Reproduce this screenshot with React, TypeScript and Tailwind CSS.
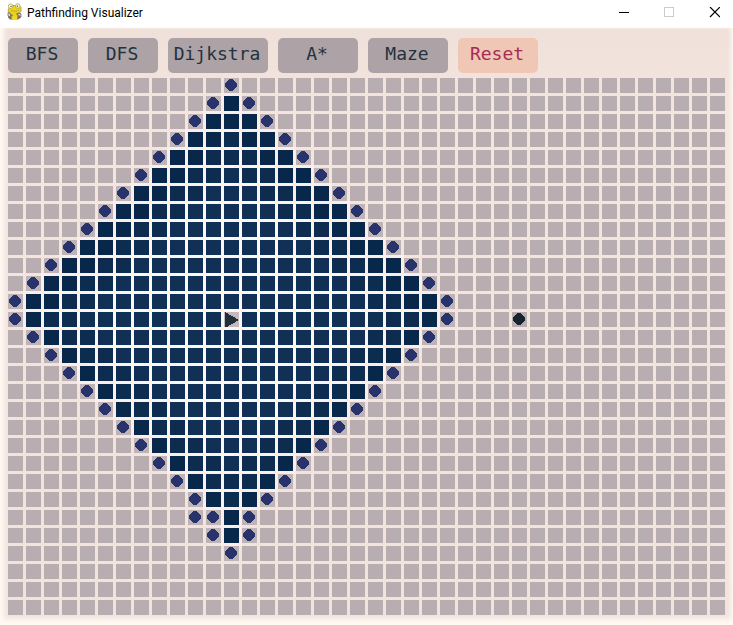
import React from "react";

type Tone = "neutral" | "danger";

const ACTIONS: { label: string; width: string; tone: Tone }[] = [
  { label: "BFS", width: "w-[70px]", tone: "neutral" },
  { label: "DFS", width: "w-[70px]", tone: "neutral" },
  { label: "Dijkstra", width: "w-[100px]", tone: "neutral" },
  { label: "A*", width: "w-20", tone: "neutral" },
  { label: "Maze", width: "w-20", tone: "neutral" },
  { label: "Reset", width: "w-20", tone: "danger" },
];

const TONES: Record<Tone, string> = {
  neutral: "bg-[#ada3a6] text-[#22323e]",
  danger: "bg-[#f0c6b4] text-[#a52d55]",
};

const COLS = 40;
const ROWS = 30;
const START = { row: 13, col: 12 };
const GOAL = { row: 13, col: 28 };

// First and last frontier column of every row that the search has reached.
const FRONTIER: [number, number][] = [
  [12, 12], [11, 13], [10, 14], [9, 15], [8, 16], [7, 17], [6, 18], [5, 19], [4, 20],
  [3, 21], [2, 22], [1, 23], [0, 24], [0, 24], [1, 23], [2, 22], [3, 21], [4, 20],
  [5, 19], [6, 18], [7, 17], [8, 16], [9, 15], [10, 14], [10, 13], [11, 13], [12, 12],
];

function Disc({ color }: { color: string }) {
  return (
    <svg width="15" height="15" viewBox="0 0 15 15" shapeRendering="crispEdges" className={color} aria-hidden="true">
      <path
        fill="currentColor"
        d="M5 1h4v1h1v1h1v1h1v1h1v4h-1v1h-1v1h-1v1h-1v1H5v-1H4v-1H3v-1H2V9H1V5h1V4h1V3h1V2h1z"
      />
    </svg>
  );
}

function Cell({ row, col }: { row: number; col: number }) {
  const plain = "size-[15px] bg-[#b8adb1]";
  if (row === START.row && col === START.col) {
    return (
      <div className="size-[15px] bg-[#c3b9be] shadow-[0_0_0_3px_#fdf6f3]">
        <svg width="15" height="16" viewBox="0 0 15 16" shapeRendering="crispEdges" aria-hidden="true">
          <path d="M1 0L15 8L1 16z" fill="#1f303b" />
        </svg>
      </div>
    );
  }
  if (row === GOAL.row && col === GOAL.col) {
    return <div className={plain}><Disc color="text-[#17242e]" /></div>;
  }
  const span = FRONTIER[row];
  if (!span || col < span[0] || col > span[1]) return <div className={plain} />;
  if (col === span[0] || col === span[1] || (row === 24 && col === 11)) {
    return <div className="size-[15px] bg-[#beb3b7]"><Disc color="text-[#27336a]" /></div>;
  }
  const distance = Math.abs(row - START.row) + Math.abs(col - START.col);
  if (distance > 10) return <div className="size-[15px] bg-[#07284b] shadow-[0_0_0_3px_#faeeea]" />;
  if (distance > 8) return <div className="size-[15px] bg-[#0c2c50] shadow-[0_0_0_3px_#fcf3f0]" />;
  return <div className="size-[15px] bg-[#103155] shadow-[0_0_0_3px_#fdf6f3]" />;
}

function SnakeIcon() {
  return (
    <svg width="16" height="18" viewBox="0 0 16 18" aria-hidden="true">
      <path d="M1 9.5h10l3 1v4l-3 2H3l-2-2v-4z" fill="#77715f" />
      <path d="M3 2.5h9l2 2v4l-3 2H9l2 2-1 4H5l-1-3 2-1-3-2-2-3z" fill="#e9d31d" stroke="#a09128" strokeWidth=".7" />
      <path d="M1 9.5l3 1.5-1 3-2-1zM11 10l3 1v3l-3-1z" fill="#d8d7cf" stroke="#666151" strokeWidth=".7" />
      <path d="M5 15.5h5" fill="none" stroke="#f0d827" strokeWidth="3" />
      <circle cx="3.6" cy="3.2" r="2.3" fill="#f4f3df" stroke="#b5a83c" strokeWidth=".8" />
      <circle cx="10.8" cy="3" r="2.3" fill="#f4f3df" stroke="#b5a83c" strokeWidth=".8" />
      <circle cx="4" cy="3.4" r=".7" fill="#555" />
      <circle cx="10.5" cy="3.2" r=".7" fill="#555" />
      <path d="M4 7.5c3 1 6 1 8-.5" fill="none" stroke="#b39e20" strokeWidth=".7" />
      <path d="M11 12.5h2v2h-2z" fill="#a95a48" />
    </svg>
  );
}

export default function App() {
  return (
    <div className="flex min-h-screen flex-col bg-[#fff9f3]">
      <header className="flex h-7 items-center bg-white pr-[13px] pl-[7px] text-black">
        <div className="flex items-center gap-1 pb-1">
          <SnakeIcon />
          <h1 className="pt-0.5 font-['Roboto','Noto_Sans',sans-serif] text-xs leading-4">Pathfinding Visualizer</h1>
        </div>
        <div className="ml-auto flex items-center gap-[35px] pb-1">
          <button type="button" aria-label="Minimize" className="block">
            <svg width="10" height="11" viewBox="0 0 10 11" shapeRendering="crispEdges">
              <path d="M0 5.5h10" stroke="#000" />
            </svg>
          </button>
          <button type="button" aria-label="Maximize" disabled className="block">
            <svg width="10" height="11" viewBox="0 0 10 11" shapeRendering="crispEdges">
              <path d="M.5.5h9v9h-9z" fill="none" stroke="#ccc" />
            </svg>
          </button>
          <button type="button" aria-label="Close" className="block">
            <svg width="11" height="11" viewBox="-1 0 11 11">
              <path d="M0 0l10 10M10 0L0 10" stroke="#000" strokeWidth="1.2" />
            </svg>
          </button>
        </div>
      </header>
      <main className="flex-1 bg-linear-to-b from-[#efe0d9] via-[#f4e5df] via-15% to-[#f2e3dd] px-2 pt-[10px] pb-[10px] shadow-[inset_6px_0_5px_-2px_#fff9f3,inset_-4px_0_4px_-2px_#fff9f3,inset_0_-8px_5px_-2px_#fff9f3]">
        <nav aria-label="Algorithms" className="flex gap-[10px]">
          {ACTIONS.map(({ label, width, tone }) => (
            <button
              key={label}
              type="button"
              className={`flex h-[35px] shrink-0 justify-center rounded-[5px] pt-1 pr-0.5 font-['DejaVu_Sans_Mono',monospace] text-lg leading-6 ${width} ${TONES[tone]}`}
            >
              {label}
            </button>
          ))}
        </nav>
        <div role="img" aria-label="Search grid" className="mt-[5px] grid grid-cols-[repeat(40,15px)] gap-[3px]">
          {Array.from({ length: ROWS * COLS }, (_, i) => (
            <Cell key={i} row={Math.floor(i / COLS)} col={i % COLS} />
          ))}
        </div>
      </main>
    </div>
  );
}
